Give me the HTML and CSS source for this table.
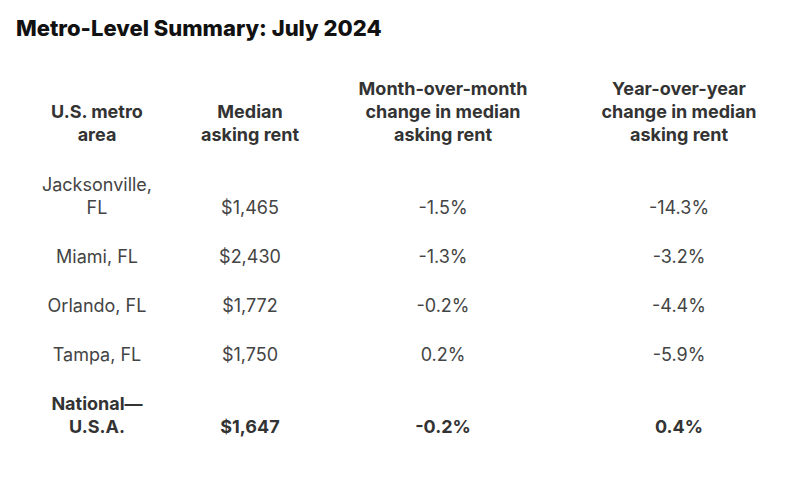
FILE: index.html
```html
<!DOCTYPE html>
<html>
<head>
<meta charset="utf-8">
<link rel="stylesheet" href="styles.css">
</head>
<body>
<h1 class="title">Metro-Level Summary: July 2024</h1>
<table class="summary">
  <colgroup>
    <col class="c1"><col class="c2"><col class="c3"><col class="c4">
  </colgroup>
  <thead>
    <tr>
      <th>U.S. metro<br>area</th>
      <th>Median<br>asking rent</th>
      <th>Month-over-month<br>change in median<br>asking rent</th>
      <th>Year-over-year<br>change in median<br>asking rent</th>
    </tr>
  </thead>
  <tbody>
    <tr><td>Jacksonville,<br>FL</td><td>$1,465</td><td>-1.5%</td><td>-14.3%</td></tr>
    <tr><td>Miami, FL</td><td>$2,430</td><td>-1.3%</td><td>-3.2%</td></tr>
    <tr><td>Orlando, FL</td><td>$1,772</td><td>-0.2%</td><td>-4.4%</td></tr>
    <tr><td>Tampa, FL</td><td>$1,750</td><td>0.2%</td><td>-5.9%</td></tr>
    <tr class="total"><td>National—<br>U.S.A.</td><td>$1,647</td><td>-0.2%</td><td>0.4%</td></tr>
  </tbody>
</table>
</body>
</html>
```
FILE: styles.css
```css
html, body {
  margin: 0;
  padding: 0;
  background: #ffffff;
}
body {
  font-family: Inter, "Noto Sans", sans-serif;
  color: #444;
}
.title {
  margin: 0;
  padding: 14px 16px 0;
  font-size: 22px;
  line-height: 28px;
  font-weight: 800;
  color: #111;
}
.summary {
  border-collapse: collapse;
  margin-top: 35px;
  table-layout: fixed;
  width: 800px;
}
.c1 { width: 172px; }
.c2 { width: 156px; }
.c3 { width: 230px; }
.c4 { width: 242px; }
.summary th {
  font-weight: 700;
  color: #333;
  font-size: 18px;
  line-height: 23px;
  padding: 0 8px 15px;
  vertical-align: bottom;
  text-align: center;
}
.summary th:first-child,
.summary td:first-child {
  padding-left: 33px;
  padding-right: 11px;
}
.summary td {
  font-size: 18px;
  line-height: 23px;
  padding: 12px 8px 14px;
  vertical-align: bottom;
  text-align: center;
}
.summary .total td {
  font-weight: 700;
  color: #333;
}
```
